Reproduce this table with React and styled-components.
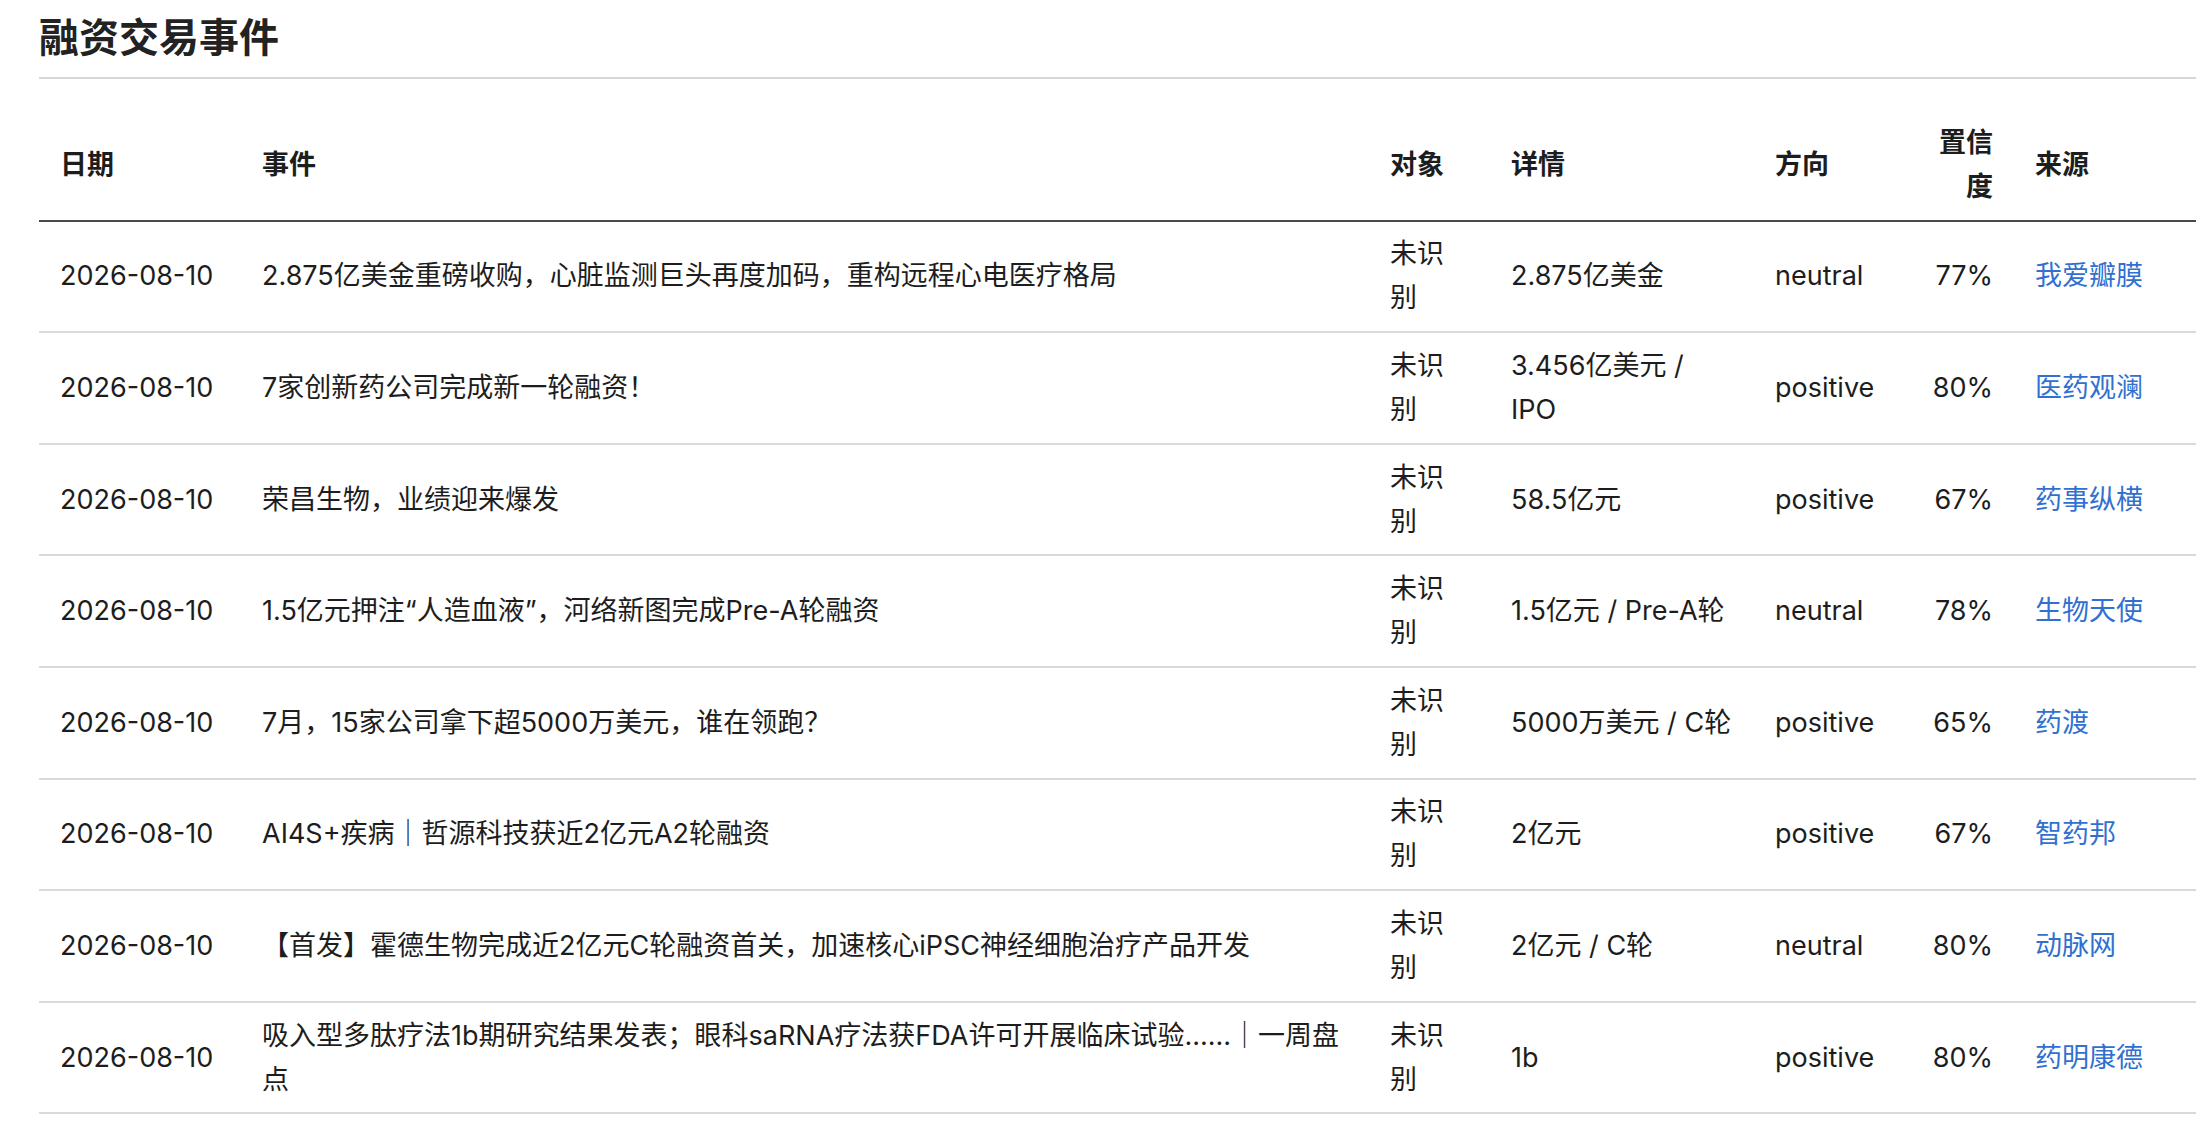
import styled, { createGlobalStyle } from "styled-components";

const GlobalStyle = createGlobalStyle`
  html, body {
    margin: 0;
    padding: 0;
    background: #fff;
    overflow: hidden;
  }
  body {
    font-family: Inter, "Noto Sans CJK SC", sans-serif;
    color: #1f1f1f;
  }
`;

const events = [
  {
    date: "2026-08-10",
    title: "2.875亿美金重磅收购，心脏监测巨头再度加码，重构远程心电医疗格局",
    target: "未识别",
    detail: "2.875亿美金",
    direction: "neutral",
    confidence: 77,
    source: "我爱瓣膜",
  },
  {
    date: "2026-08-10",
    title: "7家创新药公司完成新一轮融资！",
    target: "未识别",
    detail: "3.456亿美元 / IPO",
    direction: "positive",
    confidence: 80,
    source: "医药观澜",
  },
  {
    date: "2026-08-10",
    title: "荣昌生物，业绩迎来爆发",
    target: "未识别",
    detail: "58.5亿元",
    direction: "positive",
    confidence: 67,
    source: "药事纵横",
  },
  {
    date: "2026-08-10",
    title: "1.5亿元押注“人造血液”，河络新图完成Pre-A轮融资",
    target: "未识别",
    detail: "1.5亿元 / Pre-A轮",
    direction: "neutral",
    confidence: 78,
    source: "生物天使",
  },
  {
    date: "2026-08-10",
    title: "7月，15家公司拿下超5000万美元，谁在领跑？",
    target: "未识别",
    detail: "5000万美元 / C轮",
    direction: "positive",
    confidence: 65,
    source: "药渡",
  },
  {
    date: "2026-08-10",
    title: "AI4S+疾病｜哲源科技获近2亿元A2轮融资",
    target: "未识别",
    detail: "2亿元",
    direction: "positive",
    confidence: 67,
    source: "智药邦",
  },
  {
    date: "2026-08-10",
    title: "【首发】霍德生物完成近2亿元C轮融资首关，加速核心iPSC神经细胞治疗产品开发",
    target: "未识别",
    detail: "2亿元 / C轮",
    direction: "neutral",
    confidence: 80,
    source: "动脉网",
  },
  {
    date: "2026-08-10",
    title: "吸入型多肽疗法1b期研究结果发表；眼科saRNA疗法获FDA许可开展临床试验......｜一周盘点",
    target: "未识别",
    detail: "1b",
    direction: "positive",
    confidence: 80,
    source: "药明康德",
  },
];

const columns = [
  { key: "date", label: "日期", width: 202 },
  { key: "title", label: "事件", width: 1128 },
  { key: "target", label: "对象", width: 121 },
  { key: "detail", label: "详情", width: 264 },
  { key: "direction", label: "方向", width: 139 },
  { key: "confidence", label: "置信度", width: 121, right: true },
  { key: "source", label: "来源", width: 220 },
];

const App = () => {
  return (
    <>
      <GlobalStyle />
      <Page>
        <SectionTitle>融资交易事件</SectionTitle>
        <EventTable>
          <colgroup>
            {columns.map((c) => (
              <col key={c.key} style={{ width: c.width }} />
            ))}
          </colgroup>
          <thead>
            <tr>
              {columns.map((c) => (
                <HeadCell key={c.key} $right={c.right}>
                  {c.label}
                </HeadCell>
              ))}
            </tr>
          </thead>
          <tbody>
            {events.map((e, i) => (
              <tr key={i}>
                <Cell>{e.date}</Cell>
                <Cell>{e.title}</Cell>
                <Cell>{e.target}</Cell>
                <Cell>{e.detail}</Cell>
                <Cell>{e.direction}</Cell>
                <Cell $right>{e.confidence}%</Cell>
                <Cell>
                  <SourceLink href="#">{e.source}</SourceLink>
                </Cell>
              </tr>
            ))}
          </tbody>
        </EventTable>
      </Page>
    </>
  );
};

const Page = styled.div`
  padding-left: 39px;
  width: 2240px;
`;

const SectionTitle = styled.h2`
  margin: 0;
  padding: 14px 0 15px;
  font-size: 40px;
  line-height: 48px;
  font-weight: 700;
  color: #222;
  border-bottom: 2px solid #d6d6d6;
`;

const EventTable = styled.table`
  margin-top: 31px;
  width: 2195px;
  table-layout: fixed;
  border-collapse: collapse;
  font-size: 27px;
  line-height: 44px;
`;

const HeadCell = styled.th`
  padding: 10.8px 21px;
  text-align: ${(p) => (p.$right ? "right" : "left")};
  vertical-align: middle;
  font-weight: 700;
  color: #1d1d1d;
  border-bottom: 2px solid #4a4a4a;
`;

const Cell = styled.td`
  padding: 10.8px 21px;
  text-align: ${(p) => (p.$right ? "right" : "left")};
  vertical-align: middle;
  color: #1d1d1d;
  border-bottom: 2px solid #d9d9d9;
`;

const SourceLink = styled.a`
  color: #3170d0;
  text-decoration: none;
`;

export default App;
